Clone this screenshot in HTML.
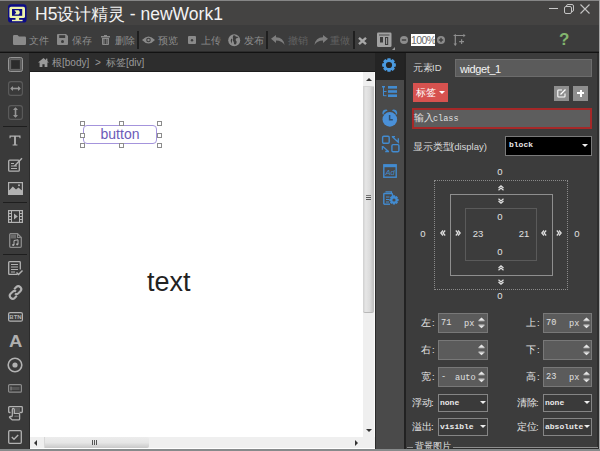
<!DOCTYPE html>
<html><head><meta charset="utf-8">
<style>
*{margin:0;padding:0;box-sizing:border-box}
html,body{width:600px;height:451px;overflow:hidden;background:#3c3c3c;font-family:"Liberation Sans",sans-serif;white-space:nowrap}
.a{position:absolute}
.c{display:inline-block;vertical-align:baseline}
svg{position:absolute;overflow:visible}
.tb{color:#8c8c8c;font-size:10px;line-height:12px;top:35px;white-space:nowrap}
.sep{position:absolute;top:31px;width:2px;height:18px;background:#1f1f1f}
.lbl{color:#d8d8d8;font-size:9.5px;line-height:12px;white-space:nowrap}
.mono{font-family:"Liberation Mono",monospace}
.inp{position:absolute;background:#5b5b5b;border:1px solid #7a7a7a}
.sel{position:absolute;background:#3a3a3a;border:1px solid #858585}
.bm{color:#e0e0e0;font-size:9.5px;line-height:10px;width:20px;text-align:center}
.ti{color:#e0e0e0;font-size:8.6px;line-height:12px}
.si{color:#eaeaea;font-size:8px;line-height:12px;font-weight:bold}
.caret{position:absolute;width:0;height:0;border-left:3px solid transparent;border-right:3px solid transparent;border-top:3px solid #eee}
</style></head>
<body>
<!-- window top border -->
<div class="a" style="left:0;top:0;width:600px;height:1px;background:#868686"></div>
<!-- title bar -->
<div class="a" style="left:0;top:1px;width:599px;height:24px;background:#444342"></div>
<!-- toolbar -->
<div class="a" style="left:0;top:25px;width:599px;height:26px;background:#3c3c3c"></div>
<div class="a" style="left:0;top:51px;width:599px;height:1px;background:#2c2c2c"></div><div class="a" style="left:0;top:52px;width:599px;height:1px;background:#121212"></div>
<!-- right window border -->
<div class="a" style="left:599px;top:0;width:1px;height:451px;background:#a8a8a8"></div>


<!-- left sidebar -->
<div class="a" style="left:0;top:53px;width:30px;height:398px;background:#3a3a3a;border-right:1px solid #2c2c2c"></div>
<!-- breadcrumb -->
<div class="a" style="left:30px;top:53px;width:345px;height:19px;background:#2d2d2d;border-bottom:1px solid #1d1d1d"></div>
<svg style="left:38px;top:58px" width="11" height="9" viewBox="0 0 11 9"><path d="M5.5 0L11 4.6H9.4V9H6.6V6.2H4.4V9H1.6V4.6H0Z" fill="#9a9a9a"/><rect x="8" y="0.6" width="1.4" height="2.5" fill="#9a9a9a"/></svg>
<div class="a" style="left:52px;top:57px;color:#9a9a9a;font-size:10px;line-height:12px;white-space:nowrap"><span class="c" style="width:1em">根</span>[body]</div>
<div class="a" style="left:95px;top:57px;color:#9a9a9a;font-size:10px;line-height:12px">&gt;</div>
<div class="a" style="left:106px;top:57px;color:#9a9a9a;font-size:10px;line-height:12px;white-space:nowrap"><span class="c" style="width:2em">标签</span>[div]</div>
<!-- canvas -->
<div class="a" style="left:30px;top:72px;width:334px;height:365px;background:#ffffff"></div>
<!-- vertical scrollbar -->
<div class="a" style="left:363px;top:72px;width:12px;height:365px;background:#efefef;border-right:1px solid #fafafa"></div>
<div class="a" style="left:366px;top:78px;width:0;height:0;border-left:3px solid transparent;border-right:3px solid transparent;border-bottom:3px solid #333"></div>
<div class="a" style="left:363px;top:86px;width:11px;height:227px;border-radius:0 0 2px 2px;background:linear-gradient(to right,#d0d0d0 0,#e6e6e6 25%,#dcdcdc 60%,#bcbcbc 100%);border-top:1px solid #d4d4d4;border-bottom:1px solid #b8b8b8"></div>
<div class="a" style="left:366px;top:195px;width:5px;height:1px;background:#777"></div>
<div class="a" style="left:366px;top:197px;width:5px;height:1px;background:#555"></div>
<div class="a" style="left:366px;top:199px;width:5px;height:1px;background:#555"></div>
<div class="a" style="left:366px;top:429px;width:0;height:0;border-left:3px solid transparent;border-right:3px solid transparent;border-top:3px solid #333"></div>
<!-- horizontal scrollbar -->
<div class="a" style="left:30px;top:437px;width:345px;height:12px;background:#efefef;border-bottom:1px solid #fff"></div>
<div class="a" style="left:34px;top:440px;width:0;height:0;border-top:3px solid transparent;border-bottom:3px solid transparent;border-right:3px solid #333"></div>
<div class="a" style="left:44px;top:437px;width:105px;height:11px;border-radius:0 2px 2px 0;background:linear-gradient(to bottom,#ececec 0,#e6e6e6 50%,#c8c8c8 100%);border-left:1px solid #d8d8d8"></div>
<div class="a" style="left:92px;top:440px;width:1px;height:5px;background:#555"></div>
<div class="a" style="left:94px;top:440px;width:1px;height:5px;background:#555"></div>
<div class="a" style="left:96px;top:440px;width:1px;height:5px;background:#555"></div>
<div class="a" style="left:355px;top:440px;width:0;height:0;border-top:3px solid transparent;border-bottom:3px solid transparent;border-left:3px solid #333"></div>

<!-- icon column -->
<div class="a" style="left:375px;top:53px;width:29px;height:398px;background:#4a4a4a;border-left:1px solid #2a2a2a"></div>
<div class="a" style="left:375px;top:53px;width:29px;height:27px;background:#242424"></div>
<div class="a" style="left:404px;top:53px;width:2px;height:398px;background:#222"></div>
<!-- property panel -->
<div class="a" style="left:406px;top:53px;width:191px;height:398px;background:#3c3c3c"></div>
<div class="a" style="left:597px;top:53px;width:2px;height:398px;background:#2e2e2e"></div>


<!-- sidebar icons -->
<svg style="left:8px;top:57px" width="15" height="15" viewBox="0 0 15 15"><rect x="0.5" y="0.5" width="14" height="14" rx="2" fill="#7a7a7a" stroke="#959595" stroke-width="1"/><rect x="1.5" y="1.5" width="12" height="12" fill="#3a3a3a"/><rect x="2.5" y="2.5" width="10" height="10" fill="none" stroke="#8a8a8a" stroke-width="1" stroke-dasharray="1 1"/><rect x="3.5" y="3.5" width="8" height="8" fill="#2c2c2c"/></svg>
<svg style="left:8px;top:81px" width="15" height="15" viewBox="0 0 15 15"><rect x="0.6" y="0.6" width="13.8" height="13.8" rx="2.5" fill="none" stroke="#5c5c5c" stroke-width="1.1"/><path d="M3 7.5H12" stroke="#959595" stroke-width="1.6"/><path d="M2.2 7.5L5 5V10Z M12.8 7.5L10 5V10Z" fill="#959595"/></svg>
<svg style="left:8px;top:105px" width="15" height="15" viewBox="0 0 15 15"><rect x="0.6" y="0.6" width="13.8" height="13.8" rx="2.5" fill="none" stroke="#5c5c5c" stroke-width="1.1"/><path d="M7.5 3V12" stroke="#959595" stroke-width="1.6"/><path d="M7.5 2.2L5 5H10Z M7.5 12.8L5 10H10Z" fill="#959595"/></svg>
<div class="a" style="left:3px;top:126px;width:24px;height:1px;background:#1e1e1e"></div>
<svg style="left:9px;top:135px" width="12" height="11" viewBox="0 0 12 11"><path d="M0.5 0.5H11.5V3.2H10.6L10.2 1.8H6.9V9.6H8.4V10.6H3.6V9.6H5.1V1.8H1.8L1.4 3.2H0.5Z" fill="#b2b2b2"/></svg>
<svg style="left:8px;top:157px" width="15" height="15" viewBox="0 0 15 15"><rect x="0.7" y="3.2" width="10.6" height="11" rx="1" fill="none" stroke="#b2b2b2" stroke-width="1.3"/><path d="M3 6.5H6M3 9H9M3 11.5H9" stroke="#b2b2b2" stroke-width="1.2"/><path d="M6.5 9L14 1.2" stroke="#b2b2b2" stroke-width="1.4"/></svg>
<svg style="left:8px;top:182px" width="15" height="13" viewBox="0 0 15 13"><rect x="0" y="0" width="15" height="13" fill="#b2b2b2"/><rect x="1.2" y="1.2" width="12.6" height="7" fill="#3b3b3b"/><path d="M1.2 8.5L4.8 4.5L8 7.5L10.5 5.5L13.8 8.5V11.8H1.2Z" fill="#b2b2b2"/><circle cx="11" cy="3.3" r="1" fill="#b2b2b2"/></svg>
<div class="a" style="left:3px;top:202px;width:24px;height:1px;background:#1e1e1e"></div>
<svg style="left:8px;top:210px" width="15" height="13" viewBox="0 0 15 13"><rect x="0.6" y="0.6" width="13.8" height="11.8" fill="none" stroke="#b2b2b2" stroke-width="1.2"/><path d="M3.5 0.6V12.4M11.5 0.6V12.4" stroke="#b2b2b2" stroke-width="1"/><path d="M0.6 3.5H3.5M0.6 6.5H3.5M0.6 9.5H3.5M11.5 3.5H14.4M11.5 6.5H14.4M11.5 9.5H14.4" stroke="#b2b2b2" stroke-width="1"/><path d="M6 3.5L9.8 6.5L6 9.5Z" fill="#b2b2b2"/></svg>
<svg style="left:9px;top:233px" width="13" height="15" viewBox="0 0 13 15"><path d="M1 0.7H8.5L12.3 4.5V13.3Q12.3 14.3 11.3 14.3H1.7Q0.7 14.3 0.7 13.3V1.7Q0.7 0.7 1.7 0.7Z" fill="none" stroke="#8c8c8c" stroke-width="1.3"/><path d="M8.5 0.7V4.5H12.3" fill="none" stroke="#8c8c8c" stroke-width="1.1"/><rect x="1.5" y="1.5" width="5.5" height="4" fill="#6a6a6a"/><path d="M5 12V7.5L9 6.8V11.3" fill="none" stroke="#b2b2b2" stroke-width="1"/><circle cx="4.2" cy="12" r="1.1" fill="#b2b2b2"/><circle cx="8.2" cy="11.3" r="1.1" fill="#b2b2b2"/></svg>
<div class="a" style="left:3px;top:254px;width:24px;height:1px;background:#1e1e1e"></div>
<svg style="left:8px;top:261px" width="15" height="15" viewBox="0 0 15 15"><path d="M9.5 13.4H1.5Q0.7 13.4 0.7 12.6V1.5Q0.7 0.7 1.5 0.7H11.5Q12.3 0.7 12.3 1.5V8.5" fill="none" stroke="#b2b2b2" stroke-width="1.3"/><path d="M3 3.5H10M3 6H10M3 8.5H10M3 11H7" stroke="#b2b2b2" stroke-width="1.1"/><path d="M8.5 11.5L10.5 13.5L14.5 9.5" fill="none" stroke="#b2b2b2" stroke-width="1.5"/></svg>
<svg style="left:8px;top:285px" width="15" height="15" viewBox="0 0 15 15"><path d="M6.2 4.2L8.3 2.1Q10.2 0.2 12.3 2.1Q14.4 4.2 12.4 6.2L10.3 8.3Q8.6 9.9 7 8.5" fill="none" stroke="#b2b2b2" stroke-width="2.1"/><path d="M8.8 10.8L6.7 12.9Q4.8 14.8 2.7 12.9Q0.6 10.8 2.6 8.8L4.7 6.7Q6.4 5.1 8 6.5" fill="none" stroke="#b2b2b2" stroke-width="2.1"/></svg>
<svg style="left:8px;top:312px" width="15" height="10" viewBox="0 0 15 10"><rect x="0.6" y="0.6" width="13.8" height="8.6" rx="1.5" fill="none" stroke="#b2b2b2" stroke-width="1.2"/><text x="7.5" y="7.3" font-family="Liberation Sans" font-size="6" font-weight="bold" fill="#b2b2b2" text-anchor="middle">BTN</text></svg>
<div class="a" style="left:9px;top:333px;color:#b0b0b0;font-size:16.5px;line-height:16px;font-weight:bold;transform:scaleX(1.12);transform-origin:left">A</div>
<svg style="left:7px;top:357px" width="16" height="16" viewBox="0 0 16 16"><circle cx="8" cy="8" r="6.8" fill="none" stroke="#b2b2b2" stroke-width="1.6"/><circle cx="8" cy="8" r="2.6" fill="#b2b2b2"/></svg>
<svg style="left:8px;top:384px" width="14" height="9" viewBox="0 0 14 9"><rect x="0.6" y="0.6" width="12.8" height="7.6" rx="1" fill="none" stroke="#8c8c8c" stroke-width="1.2"/><rect x="2.5" y="3" width="9" height="3" fill="#555"/><rect x="2.5" y="2.5" width="1" height="4" fill="#8c8c8c"/></svg>
<svg style="left:8px;top:406px" width="15" height="15" viewBox="0 0 15 15"><path d="M2.5 6.5H1.5Q0.7 6.5 0.7 5.7V1.5Q0.7 0.7 1.5 0.7H13.5Q14.3 0.7 14.3 1.5V5.7Q14.3 6.5 13.5 6.5H11.5" fill="none" stroke="#b2b2b2" stroke-width="1.3"/><path d="M7 3H12M7 5H12" stroke="#777" stroke-width="1"/><path d="M4.3 10.5V3.4Q4.3 2.4 5.3 2.4Q6.3 2.4 6.3 3.4V7.4H10.6Q11.6 7.4 11.6 8.4V12.9Q11.6 13.9 10.6 13.9H4.2L1.6 11.6Q1.2 10.8 2.2 10.5H4.3" fill="#3a3a3a" stroke="#b2b2b2" stroke-width="1.3"/><path d="M6.3 10.2H10.8" stroke="#777" stroke-width="1"/></svg>
<svg style="left:8px;top:430px" width="14" height="14" viewBox="0 0 14 14"><rect x="0.7" y="0.7" width="12.6" height="12.6" rx="1" fill="none" stroke="#b2b2b2" stroke-width="1.3"/><path d="M3.8 7L6 9.2L10.2 5" fill="none" stroke="#b2b2b2" stroke-width="1.4"/></svg>


<!-- canvas content -->
<div class="a" style="left:83px;top:125px;width:74px;height:19px;border:1px solid #a494dc;border-radius:4px"></div>
<div class="a" style="left:83px;top:126px;width:74px;line-height:17px;text-align:center;color:#6c5bb8;font-size:14px">button</div>
<div class="a" style="left:147px;top:267px;color:#222;font-size:27px;line-height:30px">text</div>
<div class="a" style="left:80px;top:121px;width:5px;height:5px;border:1px solid #8c8c8c;background:#fff"></div>
<div class="a" style="left:80px;top:133px;width:5px;height:5px;border:1px solid #8c8c8c;background:#fff"></div>
<div class="a" style="left:80px;top:143px;width:5px;height:5px;border:1px solid #8c8c8c;background:#fff"></div>
<div class="a" style="left:119px;top:121px;width:5px;height:5px;border:1px solid #8c8c8c;background:#fff"></div>
<div class="a" style="left:119px;top:143px;width:5px;height:5px;border:1px solid #8c8c8c;background:#fff"></div>
<div class="a" style="left:157px;top:121px;width:5px;height:5px;border:1px solid #8c8c8c;background:#fff"></div>
<div class="a" style="left:157px;top:133px;width:5px;height:5px;border:1px solid #8c8c8c;background:#fff"></div>
<div class="a" style="left:157px;top:143px;width:5px;height:5px;border:1px solid #8c8c8c;background:#fff"></div>


<!-- icon column icons -->
<svg style="left:382px;top:58px" width="14" height="14" viewBox="0 0 14 14"><path d="M12.05 5.10 L13.83 5.47 L13.83 8.53 L12.05 8.90 L11.92 9.23 L12.91 10.75 L10.75 12.91 L9.23 11.92 L8.90 12.05 L8.53 13.83 L5.47 13.83 L5.10 12.05 L4.77 11.92 L3.25 12.91 L1.09 10.75 L2.08 9.23 L1.95 8.90 L0.17 8.53 L0.17 5.47 L1.95 5.10 L2.08 4.77 L1.09 3.25 L3.25 1.09 L4.77 2.08 L5.10 1.95 L5.47 0.17 L8.53 0.17 L8.90 1.95 L9.23 2.08 L10.75 1.09 L12.91 3.25 L11.92 4.77Z M7 3.9A3.1 3.1 0 1 0 7 10.1A3.1 3.1 0 1 0 7 3.9Z" fill="#4a9ae0" fill-rule="evenodd"/></svg>
<svg style="left:382px;top:86px" width="15" height="11" viewBox="0 0 15 11"><rect x="6" y="0" width="9" height="2.6" fill="#428bd0"/><rect x="6" y="4.2" width="9" height="2.6" fill="#428bd0"/><rect x="6" y="8.4" width="9" height="2.6" fill="#428bd0"/><path d="M1.5 0V10M1.5 5.5H4.5M1.5 9.7H4.5" stroke="#428bd0" stroke-width="1"/><rect x="0" y="0" width="3" height="1.5" fill="#428bd0"/></svg>
<svg style="left:382px;top:109px" width="16" height="18" viewBox="0 0 16 18"><circle cx="7.8" cy="10.4" r="7.3" fill="#4a90d8"/><path d="M0.4 5Q0 0.6 4.6 0.6L5.6 1.8Q2 2.6 1.4 5.8Z M15.2 5Q15.6 0.6 11 0.6L10 1.8Q13.6 2.6 14.2 5.8Z" fill="#428bd0"/><path d="M7.6 6V10.8H10.8" fill="none" stroke="#2f4f70" stroke-width="1.5"/></svg>
<svg style="left:381px;top:135px" width="19" height="18" viewBox="0 0 19 18"><rect x="1.6" y="1.3" width="6.6" height="7" rx="1.2" fill="none" stroke="#428bd0" stroke-width="1.4"/><rect x="10.9" y="9.6" width="7" height="7.2" rx="1.2" fill="none" stroke="#428bd0" stroke-width="1.4"/><path d="M10.8 1.7H14M11.3 1.8L17.3 7.3V3.2" fill="none" stroke="#428bd0" stroke-width="1.3"/><path d="M1.4 11V14.8M1.6 11.2L7.5 16.5M4.2 16.5H8" fill="none" stroke="#428bd0" stroke-width="1.3"/></svg>
<svg style="left:383px;top:164px" width="14" height="14" viewBox="0 0 14 14"><rect x="0.8" y="0.8" width="12.4" height="12.4" fill="none" stroke="#428bd0" stroke-width="1.4"/><rect x="0.8" y="0.8" width="12.4" height="2.4" fill="#428bd0"/><text x="7.2" y="11" font-family="Liberation Sans" font-style="italic" font-size="7.5" fill="#428bd0" text-anchor="middle">Ad</text></svg>
<svg style="left:383px;top:191px" width="16" height="14" viewBox="0 0 16 14"><path d="M2.5 0.8H8.5V3" fill="none" stroke="#428bd0" stroke-width="1.2"/><path d="M0.8 13.2V3.2Q0.8 2.5 1.5 2.5H8.5Q9.5 2.5 9.5 3.5V6" fill="none" stroke="#428bd0" stroke-width="1.4"/><path d="M0.8 13.2H7" stroke="#428bd0" stroke-width="1.4"/><path d="M3 6H6.5M3 8.5H6M3 11H6" stroke="#428bd0" stroke-width="1"/><path d="M12.05 5.10 L13.83 5.47 L13.83 8.53 L12.05 8.90 L11.92 9.23 L12.91 10.75 L10.75 12.91 L9.23 11.92 L8.90 12.05 L8.53 13.83 L5.47 13.83 L5.10 12.05 L4.77 11.92 L3.25 12.91 L1.09 10.75 L2.08 9.23 L1.95 8.90 L0.17 8.53 L0.17 5.47 L1.95 5.10 L2.08 4.77 L1.09 3.25 L3.25 1.09 L4.77 2.08 L5.10 1.95 L5.47 0.17 L8.53 0.17 L8.90 1.95 L9.23 2.08 L10.75 1.09 L12.91 3.25 L11.92 4.77Z" transform="translate(6.2 4.2) scale(0.68)" fill="#428bd0"/><circle cx="11" cy="9" r="1.6" fill="#4a4a4a"/></svg>

<!-- app icon -->
<svg style="left:8px;top:4px" width="19" height="19" viewBox="0 0 19 19"><rect x="0" y="0.3" width="18.6" height="18.3" rx="3.2" fill="#0c0c86"/><rect x="1.4" y="2.8" width="15.6" height="11.2" rx="1.6" fill="#eef4aa"/><rect x="4" y="5" width="10.2" height="6.8" fill="#0c0c86"/><path d="M6.4 6.3H10.6Q13 8.4 10.6 10.6H6.4L8.2 8.4Z" fill="#eef4aa"/><rect x="7.5" y="13.8" width="3.6" height="2.2" fill="#eef4aa"/><rect x="4" y="15.8" width="10.6" height="1.4" fill="#eef4aa"/></svg>
<div class="a" style="left:35px;top:5px;color:#f2f2f2;font-size:17.5px;line-height:18px;white-space:nowrap">H5<span style="font-size:16.9px"><span class="c" style="width:4em">设计精灵</span></span> - newWork1</div>


<!-- window controls -->
<div class="a" style="left:549px;top:8px;width:9px;height:1px;background:#c8c8c8"></div>
<svg style="left:564px;top:4px" width="10" height="10" viewBox="0 0 10 10"><rect x="2.5" y="0.5" width="7" height="7" rx="1.5" fill="none" stroke="#c4c4c4"/><rect x="0.5" y="2.5" width="7" height="7" rx="1.5" fill="#444342" stroke="#c4c4c4"/></svg>
<svg style="left:580px;top:4px" width="10" height="10" viewBox="0 0 10 10"><path d="M0.5 0.5L9.5 9.5M9.5 0.5L0.5 9.5" stroke="#c4c4c4" stroke-width="1.1"/></svg>

<!-- toolbar items -->
<svg style="left:13px;top:35px" width="13" height="10" viewBox="0 0 13 10"><path d="M0 1.2Q0 0 1.2 0H4.5L6 1.6H11.8Q13 1.6 13 2.8V8.8Q13 10 11.8 10H1.2Q0 10 0 8.8Z" fill="#8a8a8a"/></svg>
<div class="a tb" style="left:29px"><span class="c" style="width:2em">文件</span></div>
<svg style="left:57px;top:34px" width="11" height="11" viewBox="0 0 11 11"><path d="M1 0H9L11 2V10Q11 11 10 11H1Q0 11 0 10V1Q0 0 1 0Z" fill="#8a8a8a"/><rect x="2.2" y="1.2" width="6" height="2.8" fill="#3c3c3c"/><circle cx="5.5" cy="7.5" r="1.5" fill="#3c3c3c"/></svg>
<div class="a tb" style="left:72px"><span class="c" style="width:2em">保存</span></div>
<svg style="left:101px;top:35px" width="9" height="10" viewBox="0 0 9 10"><rect x="0" y="1" width="9" height="1.5" fill="#8a8a8a"/><rect x="3" y="0" width="3" height="1.2" fill="#8a8a8a"/><path d="M1 3H8V9Q8 10 7 10H2Q1 10 1 9Z" fill="#8a8a8a"/><rect x="2.6" y="4" width="0.9" height="5" fill="#3c3c3c"/><rect x="4.1" y="4" width="0.9" height="5" fill="#3c3c3c"/><rect x="5.6" y="4" width="0.9" height="5" fill="#3c3c3c"/></svg>
<div class="a tb" style="left:115px"><span class="c" style="width:2em">删除</span></div>
<div class="sep" style="left:137px"></div>
<svg style="left:142px;top:36px" width="13" height="8" viewBox="0 0 13 8"><path d="M0 4Q6.5 -3 13 4Q6.5 11 0 4Z" fill="#8a8a8a"/><circle cx="6.5" cy="4" r="2.3" fill="#3c3c3c"/><circle cx="6.5" cy="4" r="1.2" fill="#8a8a8a"/></svg>
<div class="a tb" style="left:158px"><span class="c" style="width:2em">预览</span></div>
<svg style="left:188px;top:36px" width="8" height="8" viewBox="0 0 8 8"><rect x="0" y="0" width="8" height="8" rx="1" fill="#8a8a8a"/><circle cx="4" cy="4.2" r="1.2" fill="#3c3c3c"/></svg>
<div class="a tb" style="left:201px"><span class="c" style="width:2em">上传</span></div>
<svg style="left:227px;top:34px" width="14" height="13" viewBox="0 0 14 13"><circle cx="7.2" cy="6.2" r="6" fill="#8e8e8e"/><path d="M6.5 1.2Q8.5 1 8.7 2.6L11.6 2.9Q10.4 4 9 4.6Q8 6 9.6 7.6Q10.2 9.6 8.2 10.8Q6.6 10.4 6.8 8.2Q5.4 6.6 6 5Q5 3.4 6.5 1.2Z" fill="#3c3c3c"/><path d="M4.2 4.4Q2.8 7 4.8 9.8Q4.6 7.2 5.4 5.2Z" fill="#3c3c3c"/></svg>
<div class="a tb" style="left:244px"><span class="c" style="width:2em">发布</span></div>
<div class="sep" style="left:266px"></div>
<svg style="left:271px;top:35px" width="14" height="10" viewBox="0 0 14 10"><path d="M0 3.8L5 0V2.3Q12.5 2.5 13.5 10Q11 5.8 5 5.6V8Z" fill="#7e7e7e"/></svg>
<div class="a tb" style="left:288px;color:#626262"><span class="c" style="width:2em">撤销</span></div>
<svg style="left:314px;top:35px" width="14" height="10" viewBox="0 0 14 10"><path d="M14 3.8L9 0V2.3Q1.5 2.5 0.5 10Q3 5.8 9 5.6V8Z" fill="#7e7e7e"/></svg>
<div class="a tb" style="left:330px;color:#626262"><span class="c" style="width:2em">重做</span></div>
<div class="sep" style="left:353px"></div>
<svg style="left:358px;top:37px" width="9" height="8" viewBox="0 0 9 8"><path d="M1 0.8L8 7.2M8 0.8L1 7.2" stroke="#a8a8a8" stroke-width="2.4"/></svg>
<svg style="left:377px;top:32px" width="15" height="15" viewBox="0 0 15 15"><rect x="0" y="0.5" width="14.5" height="14.5" rx="1.2" fill="#a2a2a2"/><rect x="2" y="2.5" width="10.5" height="1" fill="#4a4a4a"/><rect x="3" y="5" width="3" height="5.5" fill="#3c3c3c"/><rect x="8" y="5" width="3.2" height="8" fill="#3c3c3c"/><rect x="9.1" y="6" width="1" height="6" fill="#a2a2a2"/></svg>
<div class="a" style="left:392px;top:47px;width:3px;height:3px;background:#9a9a9a;clip-path:polygon(100% 0,100% 100%,0 100%)"></div>
<svg style="left:400px;top:36px" width="8" height="8" viewBox="0 0 8 8"><circle cx="4" cy="4" r="4" fill="#8c8c8c"/><rect x="1.8" y="3.3" width="4.4" height="1.4" fill="#3c3c3c"/></svg>
<div class="a" style="left:411px;top:34px;width:24px;height:12px;background:#fff;color:#6a6a6a;font-size:10.5px;line-height:12px;text-align:center;letter-spacing:-0.6px;overflow:hidden">100%</div>
<svg style="left:437px;top:36px" width="8" height="8" viewBox="0 0 8 8"><circle cx="4" cy="4" r="4" fill="#8c8c8c"/><rect x="1.8" y="3.3" width="4.4" height="1.4" fill="#3c3c3c"/><rect x="3.3" y="1.8" width="1.4" height="4.4" fill="#3c3c3c"/></svg>
<svg style="left:453px;top:33px" width="14" height="14" viewBox="0 0 14 14"><path d="M2.3 1.2V12.5M0.6 2.5H11.5" stroke="#8e8e8e" stroke-width="1.2" fill="none"/><path d="M0.5 10.6L2.3 12.8L4.1 10.6Z M10.4 0.7L12.6 2.5L10.4 4.3Z" fill="#8e8e8e"/><path d="M8.6 6.3V11.1M6.2 8.7H11" stroke="#8e8e8e" stroke-width="1.2"/></svg>
<div class="a" style="left:559px;top:30.5px;color:#82b56e;font-size:17px;line-height:18px;font-weight:bold">?</div>


<!-- property panel content -->
<div class="a lbl" style="left:413px;top:62px"><span class="c" style="width:2em">元素</span>ID</div>
<div class="a" style="left:455px;top:59px;width:137px;height:18px;background:#5b5b5b;border:1px solid #6c6c6c"></div>
<div class="a" style="left:460px;top:63px;color:#f4f4f4;font-size:11px;line-height:12px;letter-spacing:-0.4px">widget_1</div>
<div class="a" style="left:413px;top:83px;width:35px;height:19px;background:#d7524f"></div>
<div class="a" style="left:416px;top:87px;color:#fff;font-size:10px;line-height:12px"><span class="c" style="width:2em">标签</span></div>
<div class="caret" style="left:439px;top:91px;border-left-width:3px;border-right-width:3px;border-top:3px solid #fff"></div>
<div class="a" style="left:554px;top:86px;width:15px;height:15px;background:#8e8e8e"></div>
<svg style="left:557px;top:89px" width="9" height="9" viewBox="0 0 9 9"><path d="M5 1H1.5Q0.8 1 0.8 1.7V7.3Q0.8 8 1.5 8H7.3Q8 8 8 7.3V4.5" fill="none" stroke="#fff" stroke-width="1.1"/><path d="M3.5 5.5L8.5 0.5" stroke="#fff" stroke-width="1.3"/></svg>
<div class="a" style="left:573px;top:86px;width:15px;height:15px;background:#8e8e8e"></div>
<div class="a" style="left:577px;top:92px;width:7px;height:2px;background:#fff"></div>
<div class="a" style="left:579.5px;top:89.5px;width:2px;height:7px;background:#fff"></div>
<div class="a" style="left:412px;top:108px;width:180px;height:21px;background:#5d5d5d;border:2px solid #a52828"></div>
<div class="a" style="left:414px;top:112px;color:#e0e0e0;font-size:9.5px;line-height:12px;white-space:nowrap"><span class="c" style="width:2em">输入</span><span class="mono" style="font-size:8.5px">class</span></div>
<div class="a lbl" style="left:413px;top:141px"><span class="c" style="width:4em">显示类型</span>(display)</div>
<div class="a" style="left:505px;top:136px;width:87px;height:20px;background:#000;border:1px solid #7a7a7a"></div>
<div class="a mono" style="left:509px;top:139px;color:#e8e8e8;font-size:8px;line-height:12px;font-weight:bold">block</div>
<div class="caret" style="left:582px;top:144px;border-left-width:3px;border-right-width:3px;border-top:3px solid #eee"></div>


<!-- box model -->
<div class="a" style="left:434px;top:180px;width:134px;height:110px;border:1px dotted #8a8a8a"></div>
<div class="a" style="left:450px;top:194px;width:103px;height:82px;border:1px solid #8e8e8e"></div>
<div class="a" style="left:465px;top:208px;width:72px;height:53px;border:1px solid #5a5a5a"></div>
<div class="a bm" style="left:490px;top:167px">0</div>
<div class="a bm" style="left:490px;top:212px">0</div>
<div class="a bm" style="left:490px;top:247px">0</div>
<div class="a bm" style="left:490px;top:291px">0</div>
<div class="a bm" style="left:413px;top:229px">0</div>
<div class="a bm" style="left:567px;top:229px">0</div>
<div class="a bm" style="left:468px;top:229px">23</div>
<div class="a bm" style="left:514px;top:229px">21</div>
<svg style="left:497.5px;top:185px" width="6" height="6" viewBox="0 0 6 6"><path d="M0.5 3L3 0.8L5.5 3M0.5 5.2L3 3L5.5 5.2" fill="none" stroke="#e0e0e0" stroke-width="1.2"/></svg>
<svg style="left:497.5px;top:198px" width="6" height="6" viewBox="0 0 6 6"><path d="M0.5 0.8L3 3L5.5 0.8M0.5 3L3 5.2L5.5 3" fill="none" stroke="#e0e0e0" stroke-width="1.2"/></svg>
<svg style="left:497.5px;top:265px" width="6" height="6" viewBox="0 0 6 6"><path d="M0.5 3L3 0.8L5.5 3M0.5 5.2L3 3L5.5 5.2" fill="none" stroke="#e0e0e0" stroke-width="1.2"/></svg>
<svg style="left:497.5px;top:279px" width="6" height="6" viewBox="0 0 6 6"><path d="M0.5 0.8L3 3L5.5 0.8M0.5 3L3 5.2L5.5 3" fill="none" stroke="#e0e0e0" stroke-width="1.2"/></svg>
<svg style="left:440px;top:230px" width="6" height="6" viewBox="0 0 6 6"><path d="M3 0.5L0.8 3L3 5.5M5.2 0.5L3 3L5.2 5.5" fill="none" stroke="#e0e0e0" stroke-width="1.2"/></svg>
<svg style="left:455px;top:230px" width="6" height="6" viewBox="0 0 6 6"><path d="M0.8 0.5L3 3L0.8 5.5M3 0.5L5.2 3L3 5.5" fill="none" stroke="#e0e0e0" stroke-width="1.2"/></svg>
<svg style="left:541px;top:230px" width="6" height="6" viewBox="0 0 6 6"><path d="M3 0.5L0.8 3L3 5.5M5.2 0.5L3 3L5.2 5.5" fill="none" stroke="#e0e0e0" stroke-width="1.2"/></svg>
<svg style="left:556px;top:230px" width="6" height="6" viewBox="0 0 6 6"><path d="M0.8 0.5L3 3L0.8 5.5M3 0.5L5.2 3L3 5.5" fill="none" stroke="#e0e0e0" stroke-width="1.2"/></svg>


<!-- position inputs -->
<div class="a" style="left:438px;top:313px;width:50px;height:20px;background:#5b5b5b;border:1px solid #787878"></div>
<div class="a" style="left:543px;top:313px;width:49px;height:20px;background:#5b5b5b;border:1px solid #787878"></div>
<div class="a lbl" style="left:421px;top:317px;color:#e4e4e4"><span class="c" style="width:1em;margin-right:1.5px">左</span>:</div>
<div class="a lbl" style="left:526px;top:317px;color:#e4e4e4"><span class="c" style="width:1em;margin-right:1.5px">上</span>:</div>
<svg style="left:478px;top:317px" width="7" height="12" viewBox="0 0 7 12"><path d="M0.5 3.3L3.5 0.5L6.5 3.3Z" fill="#e6e6e6"/><rect x="0.5" y="3.3" width="6" height="0.9" fill="#e6e6e6"/><rect x="0.5" y="7.6" width="6" height="0.9" fill="#e6e6e6"/><path d="M0.5 8.5L3.5 11.3L6.5 8.5Z" fill="#e6e6e6"/></svg>
<svg style="left:583px;top:317px" width="7" height="12" viewBox="0 0 7 12"><path d="M0.5 3.3L3.5 0.5L6.5 3.3Z" fill="#e6e6e6"/><rect x="0.5" y="3.3" width="6" height="0.9" fill="#e6e6e6"/><rect x="0.5" y="7.6" width="6" height="0.9" fill="#e6e6e6"/><path d="M0.5 8.5L3.5 11.3L6.5 8.5Z" fill="#e6e6e6"/></svg>
<div class="a mono ti" style="left:441px;top:317px">71</div>
<div class="a mono ti" style="left:464px;top:318px">px</div>
<div class="a mono ti" style="left:546px;top:317px">70</div>
<div class="a mono ti" style="left:569px;top:318px">px</div>
<div class="a" style="left:438px;top:340px;width:50px;height:20px;background:#5b5b5b;border:1px solid #787878"></div>
<div class="a" style="left:543px;top:340px;width:49px;height:20px;background:#5b5b5b;border:1px solid #787878"></div>
<div class="a lbl" style="left:421px;top:344px;color:#e4e4e4"><span class="c" style="width:1em;margin-right:1.5px">右</span>:</div>
<div class="a lbl" style="left:526px;top:344px;color:#e4e4e4"><span class="c" style="width:1em;margin-right:1.5px">下</span>:</div>
<svg style="left:478px;top:344px" width="7" height="12" viewBox="0 0 7 12"><path d="M0.5 3.3L3.5 0.5L6.5 3.3Z" fill="#e6e6e6"/><rect x="0.5" y="3.3" width="6" height="0.9" fill="#e6e6e6"/><rect x="0.5" y="7.6" width="6" height="0.9" fill="#e6e6e6"/><path d="M0.5 8.5L3.5 11.3L6.5 8.5Z" fill="#e6e6e6"/></svg>
<svg style="left:583px;top:344px" width="7" height="12" viewBox="0 0 7 12"><path d="M0.5 3.3L3.5 0.5L6.5 3.3Z" fill="#e6e6e6"/><rect x="0.5" y="3.3" width="6" height="0.9" fill="#e6e6e6"/><rect x="0.5" y="7.6" width="6" height="0.9" fill="#e6e6e6"/><path d="M0.5 8.5L3.5 11.3L6.5 8.5Z" fill="#e6e6e6"/></svg>
<div class="a" style="left:438px;top:367px;width:50px;height:20px;background:#5b5b5b;border:1px solid #787878"></div>
<div class="a" style="left:543px;top:367px;width:49px;height:20px;background:#5b5b5b;border:1px solid #787878"></div>
<div class="a lbl" style="left:421px;top:371px;color:#e4e4e4"><span class="c" style="width:1em;margin-right:1.5px">宽</span>:</div>
<div class="a lbl" style="left:526px;top:371px;color:#e4e4e4"><span class="c" style="width:1em;margin-right:1.5px">高</span>:</div>
<svg style="left:478px;top:371px" width="7" height="12" viewBox="0 0 7 12"><path d="M0.5 3.3L3.5 0.5L6.5 3.3Z" fill="#e6e6e6"/><rect x="0.5" y="3.3" width="6" height="0.9" fill="#e6e6e6"/><rect x="0.5" y="7.6" width="6" height="0.9" fill="#e6e6e6"/><path d="M0.5 8.5L3.5 11.3L6.5 8.5Z" fill="#e6e6e6"/></svg>
<svg style="left:583px;top:371px" width="7" height="12" viewBox="0 0 7 12"><path d="M0.5 3.3L3.5 0.5L6.5 3.3Z" fill="#e6e6e6"/><rect x="0.5" y="3.3" width="6" height="0.9" fill="#e6e6e6"/><rect x="0.5" y="7.6" width="6" height="0.9" fill="#e6e6e6"/><path d="M0.5 8.5L3.5 11.3L6.5 8.5Z" fill="#e6e6e6"/></svg>
<div class="a mono ti" style="left:441px;top:371px">-</div>
<div class="a mono ti" style="left:455px;top:372px">auto</div>
<div class="a mono ti" style="left:546px;top:371px">23</div>
<div class="a mono ti" style="left:569px;top:372px">px</div>
<div class="a" style="left:438px;top:394px;width:50px;height:18px;background:#3a3a3a;border:1px solid #858585"></div>
<div class="a" style="left:543px;top:394px;width:49px;height:18px;background:#3a3a3a;border:1px solid #858585"></div>
<div class="a lbl" style="left:412px;top:397px;color:#e4e4e4"><span class="c" style="width:2em">浮动</span>:</div>
<div class="a lbl" style="left:517px;top:397px;color:#e4e4e4"><span class="c" style="width:2em">清除</span>:</div>
<div class="a mono si" style="left:440px;top:397px">none</div>
<div class="a mono si" style="left:545px;top:397px">none</div>
<div class="caret" style="left:480px;top:401px;border-left-width:3px;border-right-width:3px;border-top:3px solid #eee"></div>
<div class="caret" style="left:584px;top:401px;border-left-width:3px;border-right-width:3px;border-top:3px solid #eee"></div>
<div class="a" style="left:438px;top:418px;width:50px;height:18px;background:#3a3a3a;border:1px solid #858585"></div>
<div class="a" style="left:543px;top:418px;width:49px;height:18px;background:#3a3a3a;border:1px solid #858585"></div>
<div class="a lbl" style="left:412px;top:421px;color:#e4e4e4"><span class="c" style="width:2em">溢出</span>:</div>
<div class="a lbl" style="left:517px;top:421px;color:#e4e4e4"><span class="c" style="width:2em">定位</span>:</div>
<div class="a mono si" style="left:440px;top:421px">visible</div>
<div class="a mono si" style="left:545px;top:421px">absolute</div>
<div class="caret" style="left:480px;top:425px;border-left-width:3px;border-right-width:3px;border-top:3px solid #eee"></div>
<div class="caret" style="left:584px;top:425px;border-left-width:3px;border-right-width:3px;border-top:3px solid #eee"></div>
<div class="a" style="left:407px;top:447px;width:190px;height:1px;background:#8e8e8e"></div>
<div class="a" style="left:597px;top:447px;width:1px;height:2px;background:#8e8e8e"></div>
<div class="a" style="left:407px;top:448px;width:191px;height:1px;background:#2c2c2c"></div>
<div class="a" style="left:413px;top:440px;width:40px;height:8px;background:#3c3c3c"></div>
<div class="a lbl" style="left:415px;top:440px;color:#e4e4e4;font-size:9px"><span class="c" style="width:4em">背景图片</span></div>
<div class="a" style="left:0;top:449px;width:600px;height:2px;background:#878a8b"></div>

</body></html>
